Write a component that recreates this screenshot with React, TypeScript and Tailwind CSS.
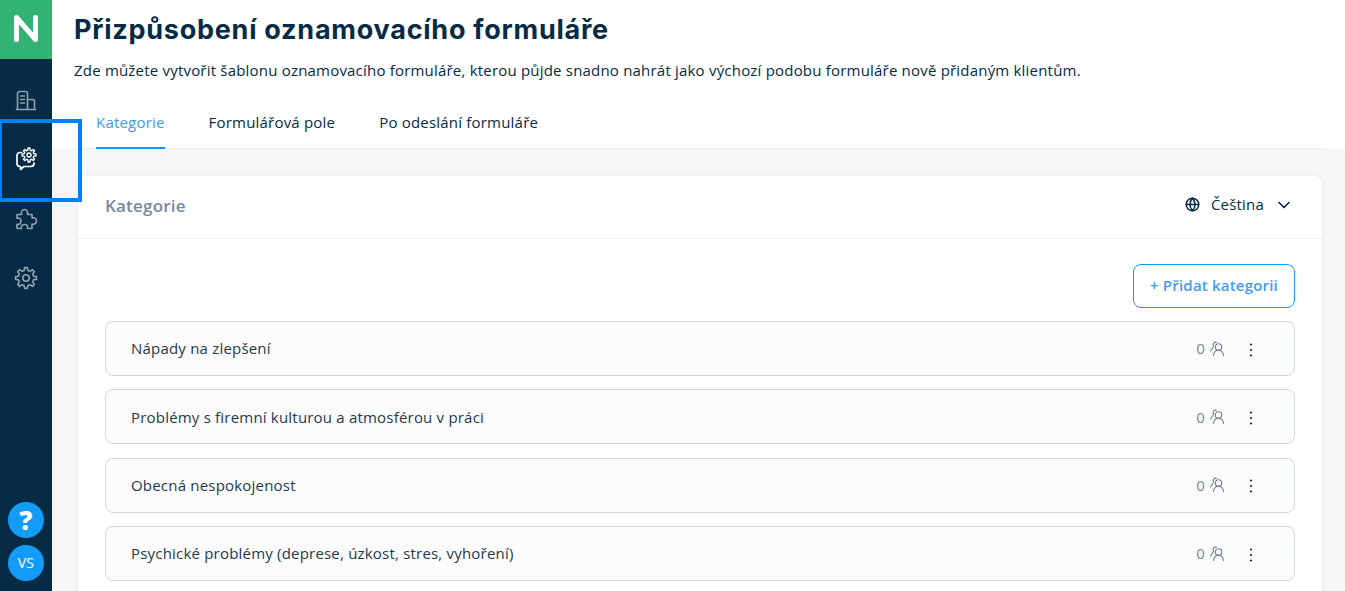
import * as React from 'react';
import { Globe, ChevronDown } from 'lucide-react';

const categories = [
    'Nápady na zlepšení',
    'Problémy s firemní kulturou a atmosférou v práci',
    'Obecná nespokojenost',
    'Psychické problémy (deprese, úzkost, stres, vyhoření)',
];

// toothed outline shared by the two gear icons
function gearPath(cx: number, cy: number, inner: number, outer: number, teeth: number) {
    const step = (Math.PI * 2) / teeth;
    const points: string[] = [];
    for (let i = 0; i < teeth; i++) {
        const a = i * step - Math.PI / 2;
        const pairs: [number, number][] = [
            [inner, a - step * 0.3],
            [outer, a - step * 0.17],
            [outer, a + step * 0.17],
            [inner, a + step * 0.3],
        ];
        pairs.forEach(([r, t]) => {
            points.push(`${(cx + r * Math.cos(t)).toFixed(2)} ${(cy + r * Math.sin(t)).toFixed(2)}`);
        });
    }
    return `M${points.join('L')}z`;
}

function LogoMark() {
    return (
        <svg width="24" height="27" viewBox="0 0 24 27" fill="none" stroke="#ffffff" strokeWidth="5" strokeLinecap="round" strokeLinejoin="round" className="-mt-[2px]">
            <path d="M2.500 24.500V2.500L21.500 24.500V2.500" />
        </svg>
    );
}

function BuildingIcon() {
    return (
        <svg width="24" height="24" viewBox="0 0 24 24" fill="none" stroke="#8fa1af" strokeWidth="1.6" strokeLinecap="round" strokeLinejoin="round">
            <path d="M3.500 21.500V5.500a2 2 0 0 1 2-2h6a2 2 0 0 1 2 2v16" />
            <path d="M13.500 11.500h5a2 2 0 0 1 2 2v8" />
            <path d="M2.500 21.500h19" />
            <path d="M6.500 8h4M6.500 11.500h4M6.500 15h4" />
        </svg>
    );
}

function ChatGear() {
    return (
        <svg width="24" height="24" viewBox="0 0 24 24" fill="none" stroke="#ffffff" strokeWidth="1.7" strokeLinecap="round" strokeLinejoin="round">
            <path d="M7.500 5.500H6a3 3 0 0 0-3 3v8a3 3 0 0 0 3 3h.5v3l3.500-3h7a3 3 0 0 0 3-3v-.5" />
            <path d={gearPath(15, 8, 5, 7, 8)} strokeWidth="1.4" />
            <circle cx="15" cy="8" r="2" strokeWidth="1.4" />
        </svg>
    );
}

function PuzzleIcon() {
    return (
        <svg width="24" height="24" viewBox="0 0 24 24" fill="none" stroke="#8fa1af" strokeWidth="1.6" strokeLinecap="round" strokeLinejoin="round">
            <path d="M3 7.500H7.500c-.8-3 1-5 3-5s3.800 2 3 5H18V11c3-.8 4.500 1 4.500 3s-1.500 3.800-4.500 3v4.500H13.500c.8-2.800-.8-4-3-4s-3.800 1.200-3 4H3v-4.300c2.500.8 4-.8 4-3s-1.500-3.800-4-3z" />
        </svg>
    );
}

function GearIcon() {
    return (
        <svg width="24" height="24" viewBox="0 0 24 24" fill="none" stroke="#8fa1af" strokeWidth="1.6" strokeLinecap="round" strokeLinejoin="round">
            <path d={gearPath(12, 12, 7.800, 10.500, 8)} />
            <circle cx="12" cy="12" r="3.200" />
        </svg>
    );
}

function PeopleIcon() {
    return (
        <svg width="16" height="16" viewBox="0 0 16 16" fill="none" stroke="#6b7f90" strokeWidth="1.1" strokeLinecap="round" strokeLinejoin="round">
            <circle cx="9.500" cy="6" r="3.200" />
            <path d="M4.500 14.500c.3-3 2.200-5.200 5-5.200s4.700 2.200 5 5.200" />
            <path d="M7.500 1.200C4.800 .8 3.300 3 4.600 5.300L1.500 10" />
        </svg>
    );
}

function DotsIcon() {
    return (
        <svg width="4" height="14" viewBox="0 0 4 14" fill="#062b45">
            <circle cx="2" cy="1.500" r="1.100" />
            <circle cx="2" cy="7" r="1.100" />
            <circle cx="2" cy="12.500" r="1.100" />
        </svg>
    );
}

export default function App() {
    return (
        <div className="relative flex h-[591px] w-[1345px] overflow-hidden bg-[#f5f6f8] font-['Open_Sans',sans-serif] text-[15px] tracking-[0.2px] text-[#062b45]">
            {/* Sidebar */}
            <aside className="flex h-full w-[52px] shrink-0 flex-col items-center bg-[#062b45]">
                <div className="flex h-[59px] w-full items-center justify-center bg-[#33b371]">
                    <LogoMark />
                </div>
                <div className="flex flex-col items-center gap-[35px] pt-[29px]">
                    <BuildingIcon />
                    <ChatGear />
                    <div className="mt-px"><PuzzleIcon /></div>
                    <GearIcon />
                </div>
                <div className="mt-auto flex flex-col items-center gap-[7px] pb-[10px]">
                    <div className="flex h-9 w-9 items-center justify-center rounded-full bg-[#139cf7] text-[26px] font-extrabold text-white">?</div>
                    <div className="flex h-9 w-9 items-center justify-center rounded-full bg-[#139cf7] text-sm font-normal text-white">VS</div>
                </div>
            </aside>

            <main className="h-full min-w-0 flex-1 overflow-hidden">
                {/* Header */}
                <div className="bg-white pl-[22px] pr-[18px]">
                    <h1 className="pt-[12px] font-['Inter',sans-serif] text-[27px] font-bold leading-[35px] tracking-[0.75px] text-[#062b45]">Přizpůsobení oznamovacího formuláře</h1>
                    <p className="mt-[12px] leading-[22px]">Zde můžete vytvořit šablonu oznamovacího formuláře, kterou půjde snadno nahrát jako výchozí podobu formuláře nově přidaným klientům.</p>
                    <div className="mt-[28px] flex gap-[44px] border-b border-[#eceef1] pl-[22px]">
                        <div className="-mb-px border-b-2 border-[#139cf7] pb-[14px] pt-[2px] leading-[22px] text-[#3f9bf5]">Kategorie</div>
                        <div className="pb-[14px] pt-[2px] leading-[22px]">Formulářová pole</div>
                        <div className="pb-[14px] pt-[2px] leading-[22px]">Po odeslání formuláře</div>
                    </div>
                </div>

                {/* Card */}
                <section className="ml-[26px] mr-[23px] mt-[27px] rounded-t-lg bg-white pb-[20px] shadow-[0_0_4px_rgba(6,43,69,0.06)]">
                    <div className="flex h-[63px] items-center justify-between border-b border-[#eceef1] pl-[27px] pr-[28px]">
                        <h2 className="-mt-[2px] text-[17px] font-semibold text-[#76899b]">Kategorie</h2>
                        <div className="-mt-[5px] flex items-center">
                            <Globe className="h-[15px] w-[15px]" strokeWidth={2.4} />
                            <span className="ml-[11px]">Čeština</span>
                            <ChevronDown className="ml-[10px] h-5 w-5" strokeWidth={2} />
                        </div>
                    </div>
                    <div className="px-[27px] pt-[25px]">
                        <div className="flex justify-end">
                            <button className="h-[44px] w-[162px] rounded-lg border border-[#139cf7] bg-white pb-[2px] font-semibold text-[#3f9bf5]">+ Přidat kategorii</button>
                        </div>
                        <div className="mt-[13.2px] flex flex-col gap-[13.3px]">
                            {categories.map((name) => (
                                <div key={name} className="flex h-[55px] shrink-0 items-center justify-between rounded-lg border border-[#d3d8dd] bg-[#fcfcfc] pl-[25px] pr-[41px] text-[#1d3a50]">
                                    <span>{name}</span>
                                    <div className="flex items-center">
                                        <span className="text-[#76899b]">0</span>
                                        <span className="ml-[4px]"><PeopleIcon /></span>
                                        <span className="ml-[24px] pt-[2px]"><DotsIcon /></span>
                                    </div>
                                </div>
                            ))}
                        </div>
                    </div>
                </section>
            </main>

            {/* Highlight frame */}
            <div className="pointer-events-none absolute -left-[2px] top-[119px] h-[83px] w-[84px] border-4 border-[#0080ff]"></div>
        </div>
    );
}
